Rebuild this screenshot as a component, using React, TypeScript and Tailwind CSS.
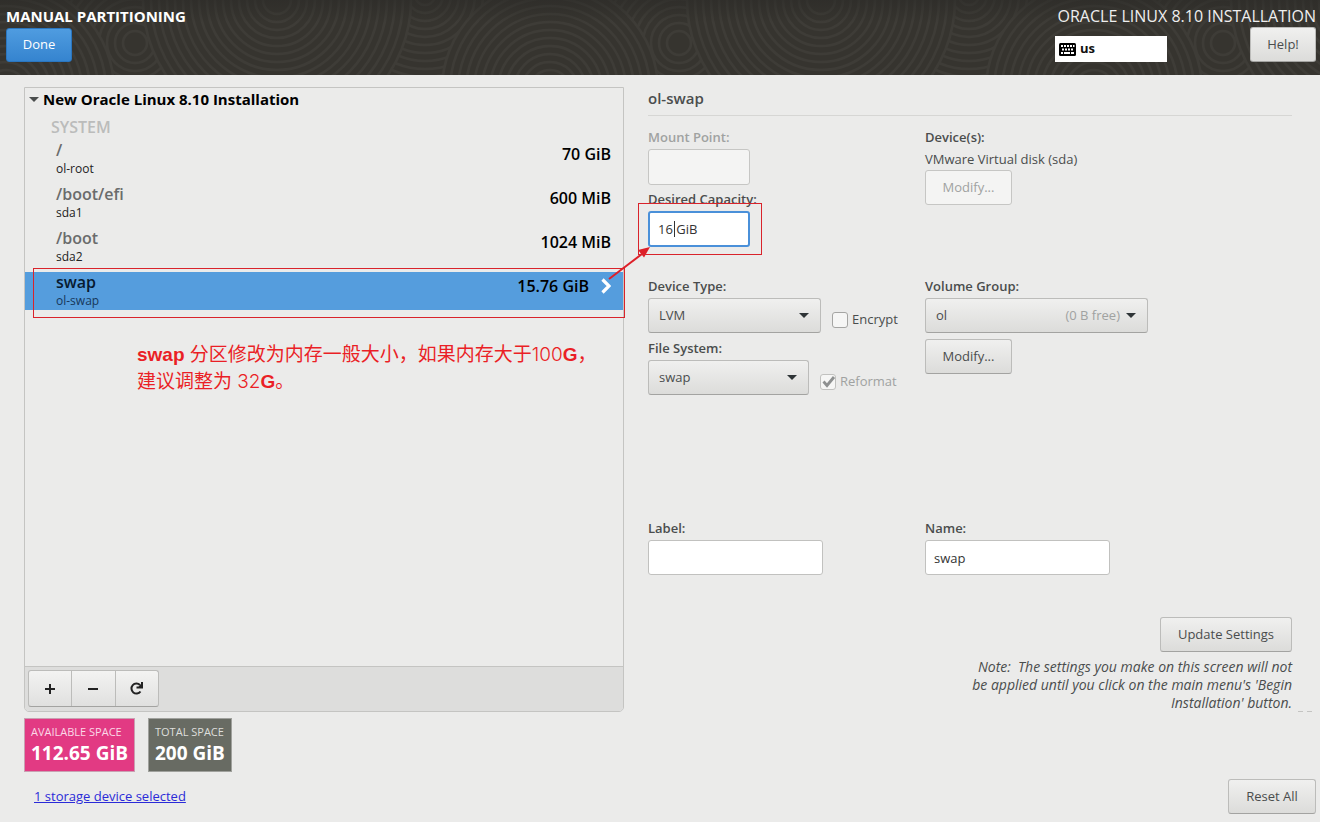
import { useState } from "react";

interface Partition {
  mount: string;
  device: string;
  size: string;
}

const partitions: Partition[] = [
  { mount: "/", device: "ol-root", size: "70 GiB" },
  { mount: "/boot/efi", device: "sda1", size: "600 MiB" },
  { mount: "/boot", device: "sda2", size: "1024 MiB" },
  { mount: "swap", device: "ol-swap", size: "15.76 GiB" },
];

const buttonStyle =
  "h-[35px] rounded-[3px] border border-[#bcbcba] border-b-[#a3a3a1] bg-gradient-to-b from-[#f0f0ef] to-[#dcdcda] text-[13px] text-[#4a4d4d]";
const inputStyle =
  "h-[35px] rounded-[3px] border border-[#c1c1bf] bg-white px-2 text-[13px] text-[#333]";
const labelStyle = "block h-6 text-[13px] leading-6 font-semibold text-[#4a4d4d]";

// Ring groups of the header texture, painted back to front
const rings = [
  { cx: 425, cy: -5, r: 90 },
  { cx: 135, cy: 43, r: 108 },
  { cx: 550, cy: 90, r: 108 },
  { cx: 277, cy: 0, r: 134 },
];

const HeaderTexture = () => (
  <svg className="absolute inset-0 h-full w-full" aria-hidden="true">
    <defs>
      <pattern id="rings" width="544" height="200" patternUnits="userSpaceOnUse">
        <rect width="544" height="200" fill="#36342f" />
        {rings.map((ring) =>
          [-544, 0, 544].map((shift) => (
            <g key={`${ring.cx}-${shift}`} stroke="#3e3c37" strokeWidth="2.5">
              {Array.from({ length: Math.floor(ring.r / 8) }, (_, i) => (
                <circle
                  key={i}
                  cx={ring.cx + shift}
                  cy={ring.cy}
                  r={ring.r - i * 8}
                  fill="#36342f"
                />
              ))}
            </g>
          ))
        )}
      </pattern>
      <linearGradient id="shade" x1="0" y1="0" x2="0" y2="1">
        <stop offset="0" stopColor="#2b2a27" stopOpacity="0.6" />
        <stop offset="0.3" stopColor="#2b2a27" stopOpacity="0" />
      </linearGradient>
    </defs>
    <rect width="100%" height="100%" fill="url(#rings)" />
    <rect width="100%" height="100%" fill="url(#shade)" />
  </svg>
);

const KeyboardIcon = () => (
  <svg width="17" height="13" viewBox="0 0 17 13" aria-hidden="true">
    <rect width="17" height="13" rx="1.5" fill="#000" />
    <g fill="#fff">
      {[2, 5, 8, 11].map((x) => (
        <rect key={x} x={x} y="2" width="2" height="2" />
      ))}
      <rect x="14" y="2" width="1.5" height="2" />
      {[3, 6, 9, 12].map((x) => (
        <rect key={x} x={x} y="5.5" width="2" height="2" />
      ))}
      <rect x="2" y="9" width="2" height="2" />
      <rect x="5" y="9" width="6" height="2" />
      <rect x="12" y="9" width="3" height="2" />
    </g>
  </svg>
);

const Caret = ({ className = "" }: { className?: string }) => (
  <svg width="10" height="5" viewBox="0 0 10 5" className={className} aria-hidden="true">
    <path d="M0 0h10L5 5z" fill="currentColor" />
  </svg>
);

const Combo = ({
  id,
  value,
  hint,
  className,
}: {
  id: string;
  value: string;
  hint?: string;
  className: string;
}) => (
  <div className={`relative ${className}`}>
    <select id={id} className={`${buttonStyle} w-full appearance-none px-2.5`}>
      <option>{value}</option>
    </select>
    <span className="pointer-events-none absolute inset-y-0 right-3 flex items-center gap-1.5 text-[13px] text-[#a0a2a1]">
      {hint}
      <Caret className="text-[#2e3436]" />
    </span>
  </div>
);

const Check = ({
  label,
  defaultChecked,
  disabled,
}: {
  label: string;
  defaultChecked?: boolean;
  disabled?: boolean;
}) => (
  <label
    className={`flex items-center gap-1 pt-2 text-[13px] ${
      disabled ? "text-[#a0a2a1]" : "text-[#4a4d4d]"
    }`}
  >
    <span className="relative flex">
      <input
        type="checkbox"
        defaultChecked={defaultChecked}
        disabled={disabled}
        className="peer h-4 w-4 appearance-none rounded-[3px] border border-[#a5a5a3] bg-[#f6f6f5] disabled:border-[#c1c1bf]"
      />
      <svg
        viewBox="0 0 16 16"
        className="pointer-events-none absolute inset-0 hidden h-4 w-4 peer-checked:block"
        aria-hidden="true"
      >
        <path d="M3.5 7.5l3.5 4L14 3" fill="none" stroke="#8e9090" strokeWidth="2.8" />
      </svg>
    </span>
    {label}
  </label>
);

const PartitionRow = ({
  partition,
  selected,
  onSelect,
}: {
  partition: Partition;
  selected: boolean;
  onSelect: () => void;
}) => (
  <button
    onClick={onSelect}
    className={`flex h-[38px] w-full justify-between pr-3 pl-[31px] text-left ${
      selected ? "bg-[#559ddd]" : ""
    }`}
  >
    <span>
      <span
        className={`block text-base leading-5 font-semibold ${
          selected ? "text-[#071a30]" : "text-[#6a6c6c]"
        }`}
      >
        {partition.mount}
      </span>
      <span
        className={`block text-xs leading-[18px] ${selected ? "text-[#17375a]" : "text-[#222]"}`}
      >
        {partition.device}
      </span>
    </span>
    <span className="flex h-7 items-center gap-3 text-base font-semibold text-black">
      {partition.size}
      {selected && (
        <svg width="10" height="16" viewBox="0 0 10 16" aria-hidden="true">
          <path d="M1.5 1.5L8 8l-6.5 6.5" fill="none" stroke="#fff" strokeWidth="3.2" />
        </svg>
      )}
    </span>
  </button>
);

const Header = () => (
  <header className="relative flex justify-between bg-[#36342f] px-1.5 pt-1 pb-[13px]">
    <HeaderTexture />
    <div className="relative">
      <h1 className="h-6 text-[15px] leading-6 font-bold text-white">MANUAL PARTITIONING</h1>
      <button className="h-[34px] w-[66px] rounded-[3px] border border-[#2a76c0] bg-gradient-to-b from-[#4f9ce0] to-[#3584cf] text-[13px] text-white">
        Done
      </button>
    </div>
    <div className="relative -mr-0.5 w-[261px]">
      <p className="h-[23px] text-right text-base leading-6 whitespace-nowrap text-[#eee]">
        ORACLE LINUX 8.10 INSTALLATION
      </p>
      <div className="flex items-end justify-between">
        <button className="flex h-[26px] w-28 items-center gap-1 bg-white px-1 text-[13px] font-bold text-[#111]">
          <KeyboardIcon />
          us
        </button>
        <button className={`${buttonStyle} w-[66px]`}>Help!</button>
      </div>
    </div>
  </header>
);

const App = () => {
  const [selected, setSelected] = useState(3);

  return (
    <div className="flex min-h-screen flex-col bg-[#ebebea] font-['Open_Sans','Noto_Sans_CJK_SC',sans-serif]">
      <Header />

      <main className="grid flex-1 grid-cols-[minmax(0,600fr)_minmax(0,644fr)] gap-6 pt-3 pr-7 pl-6">
        {/* Partition list */}
        <section className="flex flex-col rounded-b-[5px] border border-[#c4c4c2]">
          <div className="flex-1">
            <h2 className="flex h-[22px] items-center gap-1 pl-1 text-[15px] font-bold text-black">
              <Caret className="text-[#4a4d4d]" />
              New Oracle Linux 8.10 Installation
            </h2>
            <h3 className="h-[30px] pl-[26px] text-base leading-[34px] font-semibold text-[#bbbcbb]">
              SYSTEM
            </h3>
            <ul className="relative flex flex-col gap-1.5">
              {partitions.map((partition, i) => (
                <li key={partition.mount}>
                  <PartitionRow
                    partition={partition}
                    selected={i === selected}
                    onSelect={() => setSelected(i)}
                  />
                </li>
              ))}
              <li className="pointer-events-none absolute -right-0.5 -bottom-2 left-2 h-[50px] border border-[#d9232b]">
                <svg
                  width="46"
                  height="36"
                  viewBox="0 0 46 36"
                  className="absolute -top-6 -right-7"
                  aria-hidden="true"
                >
                  <path d="M3 34L36 9" stroke="#dd1f28" strokeWidth="2" />
                  <path d="M44 2L38 12.5L32 5z" fill="#dd1f28" />
                </svg>
              </li>
            </ul>
            <p className="mt-[31px] ml-28 font-['Liberation_Sans','Noto_Sans_CJK_SC',sans-serif] text-[19px] leading-[27px] text-[#ea1f26]">
              <b className="font-bold">swap</b>{" "}
              <span className="font-['Inter','Noto_Sans_CJK_SC',sans-serif]">
                分区修改为内存一般大小，如果内存大于
              </span>
              <span className="font-['Inter',sans-serif] font-light">100</span>
              <b className="font-bold">G</b>，<br />
              <span className="font-['Inter','Noto_Sans_CJK_SC',sans-serif]">建议调整为 </span>
              <span className="font-['Inter',sans-serif] font-light">32</span>
              <b className="font-bold">G</b>。
            </p>
          </div>
          <div className="rounded-b-[4px] border-t border-[#c4c4c2] bg-[#dddddc] px-[3px] pt-[3px] pb-1">
            <div className="flex h-[37px] w-[131px] divide-x divide-[#bcbcba] rounded-[3px] border border-[#bcbcba] border-b-[#a3a3a1] bg-gradient-to-b from-[#f3f3f2] to-[#e0e0df] text-[#222]">
              <button aria-label="Add" className="flex flex-1 items-center justify-center">
                <svg width="12" height="12" viewBox="0 0 12 12" aria-hidden="true">
                  <path d="M6 1v10M1 6h10" stroke="currentColor" strokeWidth="2" />
                </svg>
              </button>
              <button aria-label="Remove" className="flex flex-1 items-center justify-center">
                <svg width="12" height="12" viewBox="0 0 12 12" aria-hidden="true">
                  <path d="M1 6h10" stroke="currentColor" strokeWidth="2" />
                </svg>
              </button>
              <button aria-label="Reload" className="flex flex-1 items-center justify-center">
                <svg width="15" height="15" viewBox="0 0 15 15" aria-hidden="true">
                  <path
                    d="M11.5 10.5A5 5 0 1 1 11 4"
                    fill="none"
                    stroke="currentColor"
                    strokeWidth="2"
                  />
                  <path d="M14 1v6.5H7.5V5.5h2L12 3V1z" fill="currentColor" />
                </svg>
              </button>
            </div>
          </div>
        </section>

        {/* Details of the selected device */}
        <section className="text-[13px] text-[#4a4d4d]">
          <h2 className="h-[29px] border-b border-[#d6d6d4] text-[15px] leading-[22px] font-semibold">
            ol-swap
          </h2>

          <div className="mt-[9px] grid grid-cols-[minmax(0,277fr)_minmax(0,367fr)]">
            <div>
              <label htmlFor="mount" className="block h-6 leading-6 font-semibold text-[#a0a2a1]">
                Mount Point:
              </label>
              <input
                id="mount"
                disabled
                className="h-9 w-[102px] rounded-[3px] border border-[#c6c6c4] bg-[#f4f4f3] px-2"
              />
              <label htmlFor="capacity" className={`${labelStyle} mt-0.5`}>
                Desired Capacity:
              </label>
              <div className="relative w-[102px]">
                <input
                  id="capacity"
                  defaultValue="16 GiB"
                  className="h-9 w-full rounded-[3px] border-2 border-[#4a90d9] bg-white px-2 text-[#333] caret-transparent outline-none"
                />
                <span className="absolute top-2.5 left-[26px] h-4 w-px bg-[#333]" />
                <span className="pointer-events-none absolute -top-2 -right-3 -bottom-2 -left-2.5 border border-[#d9232b]" />
              </div>
            </div>
            <div>
              <p className={labelStyle}>Device(s):</p>
              <p className="leading-5">VMware Virtual disk (sda)</p>
              <button
                disabled
                className="mt-px h-[35px] w-[87px] rounded-[3px] border border-[#c6c6c4] bg-[#f4f4f3] text-[#a0a2a1]"
              >
                Modify...
              </button>
            </div>
          </div>

          <div className="mt-[27px] grid grid-cols-[minmax(0,277fr)_minmax(0,367fr)]">
            <div>
              <label htmlFor="device-type" className={labelStyle}>
                Device Type:
              </label>
              <div className="flex items-center gap-[11px]">
                <Combo id="device-type" value="LVM" className="w-[173px]" />
                <Check label="Encrypt" />
              </div>
              <label htmlFor="file-system" className={`${labelStyle} mt-[3px]`}>
                File System:
              </label>
              <div className="flex items-center gap-[11px]">
                <Combo id="file-system" value="swap" className="w-[161px]" />
                <Check label="Reformat" defaultChecked disabled />
              </div>
            </div>
            <div>
              <label htmlFor="volume-group" className={labelStyle}>
                Volume Group:
              </label>
              <Combo id="volume-group" value="ol" hint="(0 B free)" className="w-[223px]" />
              <button className={`${buttonStyle} mt-1.5 w-[87px]`}>Modify...</button>
            </div>
          </div>

          <div className="mt-[121px] grid grid-cols-[minmax(0,277fr)_minmax(0,367fr)]">
            <div>
              <label htmlFor="label" className={labelStyle}>
                Label:
              </label>
              <input id="label" className={`${inputStyle} w-[175px]`} />
            </div>
            <div>
              <label htmlFor="name" className={labelStyle}>
                Name:
              </label>
              <input id="name" defaultValue="swap" className={`${inputStyle} w-[185px]`} />
            </div>
          </div>

          <div className="mt-[42px] flex flex-col items-end">
            <button className={`${buttonStyle} w-[132px]`}>Update Settings</button>
            <p className="relative mt-1.5 w-[340px] text-right text-sm leading-[18px] whitespace-pre-line italic">
              Note:&nbsp; The settings you make on this screen will not{"\n"}
              be applied until you click on the main menu's 'Begin{"\n"}
              Installation' button.
              <svg
                width="14"
                height="1"
                className="absolute -right-5 bottom-0"
                aria-hidden="true"
              >
                <path d="M0 .5h5M9 .5h5" stroke="#c4c4c2" />
              </svg>
            </p>
          </div>
        </section>
      </main>

      <footer className="px-1 pt-1.5 pb-2">
        <div className="flex gap-[13px] pl-5 text-white">
          <div className="h-[54px] border border-[#c9a0b2] bg-[#e23a83] px-1.5 pt-1">
            <p className="text-[11px] leading-[18px] text-[#fbd9e7]">AVAILABLE SPACE</p>
            <p className="text-[19px] leading-6 font-bold">112.65 GiB</p>
          </div>
          <div className="h-[54px] border border-[#a0a19d] bg-[#686b63] px-1.5 pt-1">
            <p className="text-[11px] leading-[18px] text-[#dedfdc]">TOTAL SPACE</p>
            <p className="text-[19px] leading-6 font-bold">200 GiB</p>
          </div>
        </div>
        <div className="mt-[7px] flex items-center justify-between pl-[30px]">
          <a href="#storage" className="text-[13px] text-[#2a2ad8] underline">
            1 storage device selected
          </a>
          <button className={`${buttonStyle} w-[88px]`}>Reset All</button>
        </div>
      </footer>
    </div>
  );
};

export default App;
